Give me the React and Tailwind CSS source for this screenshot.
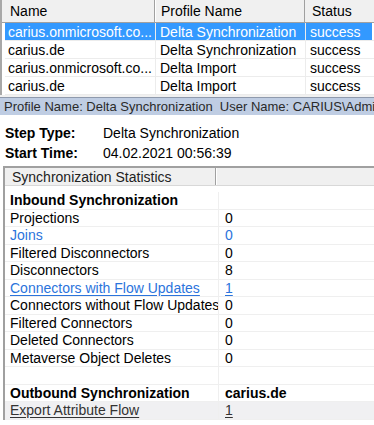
import React from "react";

const listRows = [
  ["carius.onmicrosoft.co...", "Delta Synchronization", "success", true],
  ["carius.de", "Delta Synchronization", "success", false],
  ["carius.onmicrosoft.co...", "Delta Import", "success", false],
  ["carius.de", "Delta Import", "success", false],
];

const stats = [
  { label: "Inbound Synchronization", value: "", bold: true },
  { label: "Projections", value: "0" },
  { label: "Joins", value: "0", blue: true },
  { label: "Filtered Disconnectors", value: "0" },
  { label: "Disconnectors", value: "8" },
  { label: "Connectors with Flow Updates", value: "1", link: true },
  { label: "Connectors without Flow Updates", value: "0" },
  { label: "Filtered Connectors", value: "0" },
  { label: "Deleted Connectors", value: "0" },
  { label: "Metaverse Object Deletes", value: "0" },
  { label: "", value: "" },
  { label: "Outbound Synchronization", value: "carius.de", bold: true, boldValue: true },
  { label: "Export Attribute Flow", value: "1", dark: true, selected: true },
];

export default function App() {
  return (
    <div
      className="w-[374px] h-[425px] overflow-hidden bg-white text-[14px] leading-none text-black"
      style={{ fontFamily: '"Liberation Sans", Arial, sans-serif' }}
    >
      {/* Top list view */}
      <div className="border-l-2 border-[#a8a8a8] pl-[3px]">
        <div className="flex h-[23px] bg-[#f0f0f0] border-b border-[#a0a0a0] -ml-[3px] pl-[3px]">
          <div className="w-[150px] flex items-center pl-[5px] border-r border-[#a0a0a0] shadow-[1px_0_0_#ffffff]">Name</div>
          <div className="w-[149px] flex items-center pl-[5px] border-r border-[#a0a0a0] ml-px">Profile Name</div>
          <div className="flex-1 flex items-center pl-[6px] ml-px">Status</div>
        </div>
        {listRows.map(([n, p, s, sel], i) => (
          <div key={i} className="flex h-[18px] border-b border-[#ececec]">
            <div className={`w-[150px] flex items-center pl-[3px] whitespace-nowrap overflow-hidden ${sel ? "bg-[#3399ff] text-white" : ""}`}>{n}</div>
            <div className="w-px bg-[#ececec]" />
            <div className={`w-[149px] flex items-center pl-[4px] whitespace-nowrap overflow-hidden ${sel ? "bg-[#3399ff] text-white" : ""}`}>{p}</div>
            <div className="w-px bg-[#ececec]" />
            <div className={`w-[66px] flex items-center pl-[4px] ${sel ? "bg-[#3399ff] text-white" : ""}`}>{s}</div>
            <div className="flex-1" />
          </div>
        ))}
      </div>

      {/* splitter */}
      <div className="h-[3px] bg-[#f0f0f0] border-b border-[#8f9aad]" />

      {/* profile bar */}
      <div className="h-[17px] bg-[#bfcde3] flex items-center gap-[7px] pl-[4px] whitespace-nowrap overflow-hidden text-[13px] text-[#2a2a2a]">
        <span>Profile Name: Delta Synchronization</span>
        <span>User Name: CARIUS\Administrator</span>
      </div>

      {/* step info */}
      <div className="pt-[8px] pb-[3px]">
        <div className="flex h-[20px] items-center">
          <div className="w-[103px] pl-[5px] font-bold">Step Type:</div>
          <div>Delta Synchronization</div>
        </div>
        <div className="flex h-[20px] items-center">
          <div className="w-[103px] pl-[5px] font-bold">Start Time:</div>
          <div>04.02.2021 00:56:39</div>
        </div>
      </div>

      {/* stats box */}
      <div className="ml-[3px] border-l-2 border-t-2 border-[#a0a0a0]">
        <div className="flex h-[18px] bg-[#f0f0f0] border-b border-[#d8d8d8]">
          <div className="w-[211px] flex items-center pl-[7px] border-r border-[#a0a0a0] text-[#222]">Synchronization Statistics</div>
          <div className="flex-1 border-l border-white" />
        </div>
        <div className="pt-[6px]">
          {stats.map((r, i) => (
            <div
              key={i}
              className={`flex h-[17.5px] border-b border-[#efefef] ${r.selected ? "bg-[#f0f0f2]" : ""}`}
            >
              <div
                className={`w-[213px] flex items-center pl-[5px] whitespace-nowrap overflow-hidden ${
                  r.bold ? "font-bold" : ""
                } ${r.blue || r.link ? "text-[#2b74dc]" : ""} ${r.link || r.dark ? "underline underline-offset-2" : ""} ${
                  r.dark ? "text-[#333]" : ""
                }`}
              >
                {r.label}
              </div>
              <div className="w-px bg-[#efefef]" />
              <div
                className={`flex-1 flex items-center pl-[6px] whitespace-nowrap ${r.boldValue ? "font-bold" : ""} ${
                  r.blue || r.link ? "text-[#2b74dc]" : ""
                } ${r.link || r.dark ? "underline underline-offset-2" : ""} ${r.dark ? "text-[#333]" : ""}`}
              >
                {r.value}
              </div>
            </div>
          ))}
        </div>
      </div>
    </div>
  );
}
